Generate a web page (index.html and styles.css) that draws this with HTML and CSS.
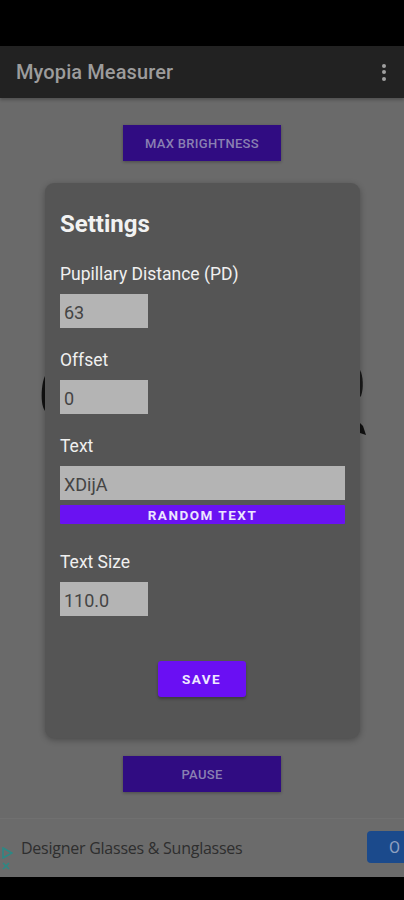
FILE: index.html
```html
<!DOCTYPE html>
<html>
<head>
<meta charset="utf-8">
<link rel="stylesheet" href="styles.css">
</head>
<body>
<div class="screen">
  <div class="statusbar"></div>
  <div class="appbar">
    <span class="title">Myopia Measurer</span>
    <span class="overflow"><i></i><i></i><i></i></span>
  </div>
  <div class="content">
    <div class="btn-dim top-btn">MAX BRIGHTNESS</div>
    <div class="backdrop-art">
      <svg width="404" height="100" viewBox="0 0 404 100">
        <path d="M45 16 C42 22 41 34 42 42 C42.5 46 43.5 49 45 51 Z" fill="#111"/>
        <path d="M360 10 C363 15 364 28 361 36 L360 37 Z" fill="#1a1a1a"/>
        <path d="M360 63 L363 66 L366 75 L360 73 Z" fill="#111"/>
      </svg>
    </div>
    <div class="btn-dim pause-btn">PAUSE</div>
  </div>
  <div class="ad">
    <div class="ad-icons">
      <svg width="12" height="12" viewBox="0 0 12 12"><path d="M2 1 L11 6 L2 11 Z" fill="none" stroke="#2a8a86" stroke-width="1.5"/></svg>
      <svg width="10" height="10" viewBox="0 0 10 10"><path d="M2 2 L8 8 M8 2 L2 8" stroke="#2a8a86" stroke-width="1.5"/></svg>
    </div>
    <span class="ad-text">Designer Glasses &amp; Sunglasses</span>
    <span class="ad-btn">O</span>
  </div>
  <div class="navbar"></div>

  <div class="dialog">
    <h1 class="dlg-title">Settings</h1>
    <div class="label">Pupillary Distance (PD)</div>
    <div class="field short">63</div>
    <div class="label">Offset</div>
    <div class="field short">0</div>
    <div class="label">Text</div>
    <div class="field wide">XDijA</div>
    <div class="random-btn">RANDOM TEXT</div>
    <div class="label size-label">Text Size</div>
    <div class="field short">110.0</div>
    <div class="save-row"><div class="save-btn">SAVE</div></div>
  </div>
</div>
</body>
</html>
```
FILE: styles.css
```css
* { box-sizing: border-box; }
html, body { margin: 0; padding: 0; }
body { font-family: Roboto, "Liberation Sans", sans-serif; background: #000; }
.screen { position: relative; width: 404px; height: 900px; background: #6a6a6a; display: flex; flex-direction: column; overflow: hidden; }
.statusbar { height: 46px; background: #000; flex: none; }
.appbar { height: 52px; background: #222222; flex: none; display: flex; align-items: center; justify-content: space-between; padding: 0 16px; box-shadow: 0 2px 3px rgba(0,0,0,0.25); }
.title { color: #9c9c9c; font-size: 20px; font-weight: 500; letter-spacing: 0.1px; }
.overflow { display: flex; flex-direction: column; gap: 2.5px; margin-right: 2px; }
.overflow i { display: block; width: 4px; height: 4px; border-radius: 50%; background: #a0a0a0; }
.content { flex: 1; display: flex; flex-direction: column; align-items: center; }
.btn-dim { width: 158px; height: 36px; background: #300c82; color: #8a80b2; font-size: 13px; font-weight: 500; display: flex; align-items: center; justify-content: center; box-shadow: 0 1px 3px rgba(0,0,0,0.3); letter-spacing: 0.3px; }
.top-btn { margin-top: 27px; }
.backdrop-art { margin-top: 199px; height: 100px; width: 404px; }
.backdrop-art svg { display: block; }
.pause-btn { margin-top: 296px; }
.ad { height: 59px; flex: none; background: #6b6b6b; border-top: 1px solid #707070; display: flex; align-items: center; position: relative; }
.ad-icons { width: 21px; display: flex; flex-direction: column; align-items: flex-start; padding-left: 1px; gap: 2px; align-self: flex-end; padding-bottom: 6px; }
.ad-icons svg { display: block; }
.ad-text { color: #2e2e2e; font-size: 16px; font-family: "Open Sans", Roboto, sans-serif; letter-spacing: -0.25px; flex: 1; }
.ad-btn { width: 37px; height: 32px; background: #1b4a8c; border-radius: 4px 0 0 4px; color: #8fa0c0; font-size: 16px; display: flex; align-items: center; padding-left: 22px; margin-top: -2px; overflow: hidden; white-space: nowrap; flex: none; }
.navbar { height: 23px; background: #000; flex: none; }
.dialog { position: absolute; left: 45px; top: 183px; width: 315px; height: 555px; background: #555555; border-radius: 9px; padding: 26px 15px 0 15px; display: flex; flex-direction: column; box-shadow: 0 2px 6px rgba(0,0,0,0.3); }
.dlg-title { margin: 0; font-size: 24px; font-weight: 700; color: #f2f2f2; line-height: 30px; }
.label { color: #f0f0f0; font-size: 17.5px; line-height: 20px; margin-top: 22px; }
.dlg-title + .label { margin-top: 25px; }
.field { background: #b4b4b4; height: 34px; margin-top: 10px; color: #444444; font-size: 18px; display: flex; align-items: center; padding-left: 4px; padding-top: 2px; }
.field.short { width: 88px; }
.field.wide { width: 285px; }
.random-btn { width: 285px; height: 19px; background: #6a12f2; margin-top: 5px; color: #ece6ff; font-size: 13.5px; font-weight: 700; letter-spacing: 1.5px; display: flex; align-items: center; justify-content: center; border-radius: 1px; }
.label.size-label { margin-top: 28px; }
.save-row { display: flex; justify-content: center; margin-top: 45px; padding-right: 2px; }
.save-btn { width: 88px; height: 36px; background: #6a0ff3; border-radius: 3px; color: #efe9ff; font-size: 13.5px; font-weight: 700; letter-spacing: 1.4px; display: flex; align-items: center; justify-content: center; box-shadow: 0 2px 3px rgba(0,0,0,0.3); }
```
